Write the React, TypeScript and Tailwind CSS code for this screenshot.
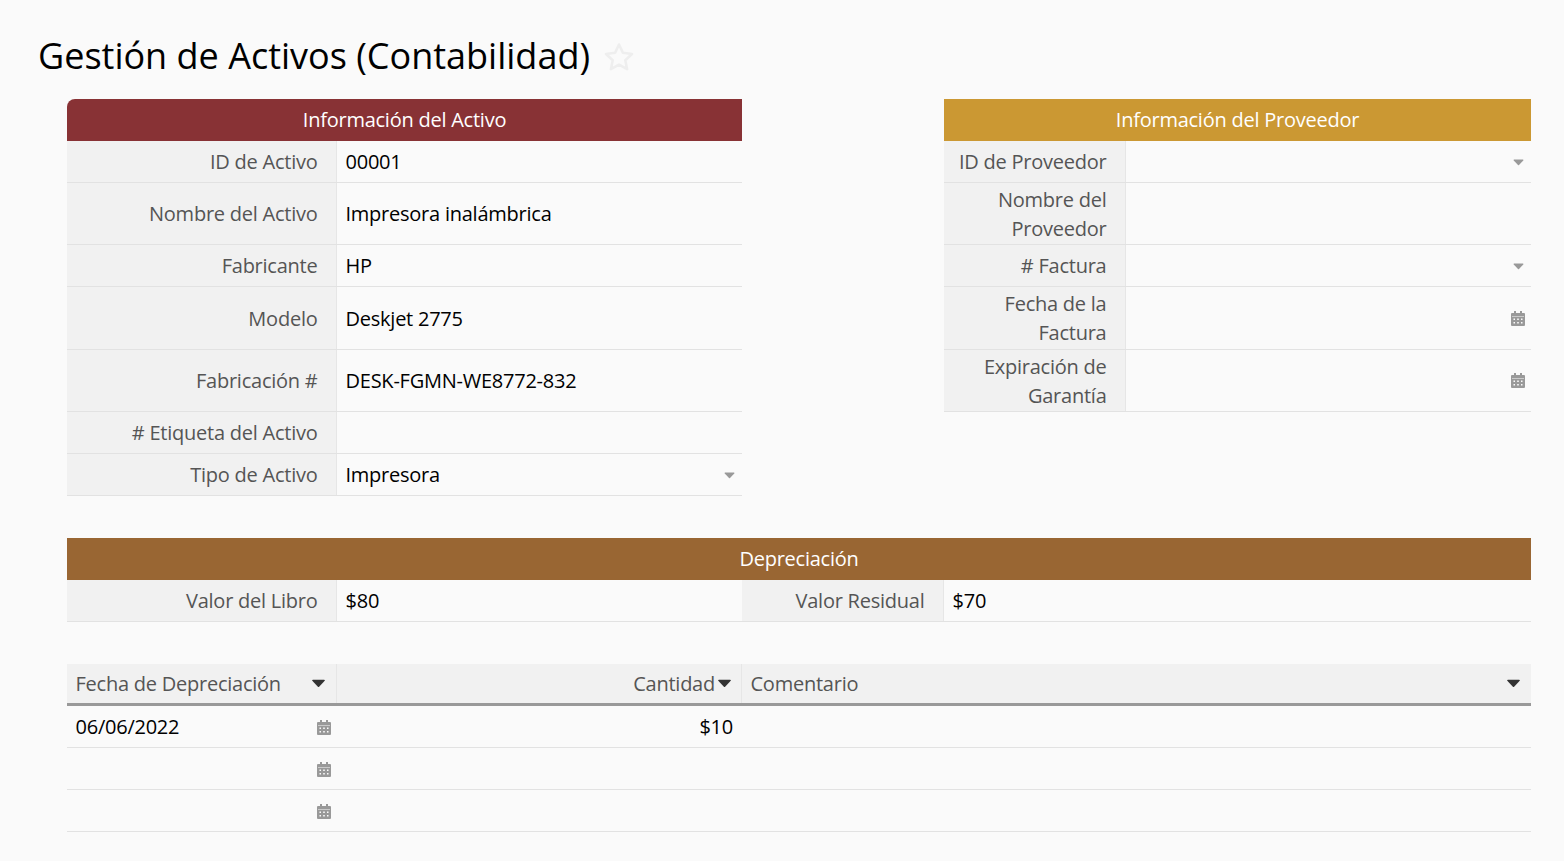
const font = '[font-family:"Open_Sans",sans-serif]';

function Caret({ dark = false }: { dark?: boolean }) {
  return (
    <svg width={dark ? 15 : 11} height={dark ? 9 : 7} viewBox="0 0 11 7" className="shrink-0">
      <path d="M0.5 1.2 Q0.5 0.5 1.2 0.5 H9.8 Q10.5 0.5 10.5 1.2 L6 6 Q5.5 6.5 5 6 Z" fill={dark ? "#333333" : "#999999"} />
    </svg>
  );
}

function Calendar() {
  return (
    <svg width="14" height="15" viewBox="0 0 14 15" className="shrink-0">
      <path
        fill="#999999"
        fillRule="evenodd"
        d="M3 0h2v2h4V0h2v2h2a1 1 0 0 1 1 1v11a1 1 0 0 1-1 1H1a1 1 0 0 1-1-1V3a1 1 0 0 1 1-1h2zM1 5v.6h12V5zM2.5 7.5v1.5h1.5V7.5zM6.2 7.5v1.5h1.6V7.5zM10 7.5v1.5h1.5V7.5zM2.5 11v1.5h1.5V11zM6.2 11v1.5h1.6V11zM10 11v1.5h1.5V11z"
      />
    </svg>
  );
}

function SectionHeader({ title, color }: { title: string; color: string }) {
  return <div className={`h-[42px] flex items-center justify-center text-white text-[20px] tracking-[-0.24px] ${color}`}>{title}</div>;
}

function Row({
  label,
  value,
  h,
  labelW,
  icon,
}: {
  label: string;
  value?: string;
  h: string;
  labelW: string;
  icon?: "caret" | "cal";
}) {
  return (
    <div className={`flex border-b border-[#e2e2e2] ${h}`}>
      <div className={`${labelW} shrink-0 bg-[#f1f1f1] border-r border-[#e6e6e6] flex items-center justify-end text-right pr-[18.5px] pl-2 text-[#555555] text-[20px] leading-[29px] tracking-[-0.24px]`}>
        <span>{label}</span>
      </div>
      <div className="flex-1 flex items-center justify-between pl-[8.5px] pr-[6px] text-black text-[20px] leading-[29px] tracking-[-0.24px]">
        <span>{value}</span>
        {icon === "caret" && <span className="pr-[1px] pt-[1px]"><Caret /></span>}
        {icon === "cal" && <Calendar />}
      </div>
    </div>
  );
}

function TableRow({ date, amount }: { date?: string; amount?: string }) {
  return (
    <div className="flex h-[42px] border-b border-[#e2e2e2] text-black text-[20px] tracking-[-0.24px]">
      <div className="w-[270px] flex items-center justify-between pl-[8.5px] pr-[6px]">
        <span>{date}</span>
        <span className="pt-[1px]"><Calendar /></span>
      </div>
      <div className="w-[405px] flex items-center justify-end pr-[9px]">{amount}</div>
    </div>
  );
}

export default function App() {
  return (
    <div className={`min-h-[861px] bg-[#fafafa] ${font}`}>
      <div className="flex items-center pl-[38px] pt-[29px] h-[99px] pb-[17px]">
        <h1 className="text-[36px] text-black tracking-[0px] leading-[50px]">Gestión de Activos (Contabilidad)</h1>
        <svg width="32" height="32" viewBox="0 0 32 32" className="ml-[13px] mt-[3px]">
          <path
            d="M16 3.5l3.9 8.3 9.1 1.2-6.7 6.2 1.8 9-8.1-4.5-8.1 4.5 1.8-9L3 13l9.1-1.2z"
            fill="none"
            stroke="#eeeeee"
            strokeWidth="2.6"
            strokeLinejoin="round"
          />
        </svg>
      </div>

      <div className="pl-[67px] pr-[33px]">
        <div className="flex gap-[202px] items-start">
          <div className="w-[675px]">
            <div className="rounded-tl-[8px] overflow-hidden">
              <SectionHeader title="Información del Activo" color="bg-[#883235]" />
            </div>
            <Row labelW="w-[270px]" h="h-[42px]" label="ID de Activo" value="00001" />
            <Row labelW="w-[270px]" h="h-[62px]" label="Nombre del Activo" value="Impresora inalámbrica" />
            <Row labelW="w-[270px]" h="h-[42px]" label="Fabricante" value="HP" />
            <Row labelW="w-[270px]" h="h-[63px]" label="Modelo" value="Deskjet 2775" />
            <Row labelW="w-[270px]" h="h-[62px]" label="Fabricación #" value="DESK-FGMN-WE8772-832" />
            <Row labelW="w-[270px]" h="h-[42px]" label="# Etiqueta del Activo" />
            <Row labelW="w-[270px]" h="h-[42px]" label="Tipo de Activo" value="Impresora" icon="caret" />
          </div>
          <div className="flex-1">
            <SectionHeader title="Información del Proveedor" color="bg-[#cb9833]" />
            <Row labelW="w-[182px]" h="h-[42px]" label="ID de Proveedor" icon="caret" />
            <Row labelW="w-[182px]" h="h-[62px]" label="Nombre del Proveedor" />
            <Row labelW="w-[182px]" h="h-[42px]" label="# Factura" icon="caret" />
            <Row labelW="w-[182px]" h="h-[63px]" label="Fecha de la Factura" icon="cal" />
            <Row labelW="w-[182px]" h="h-[62px]" label="Expiración de Garantía" icon="cal" />
          </div>
        </div>

        <div className="mt-[42px]">
          <SectionHeader title="Depreciación" color="bg-[#996633]" />
          <div className="flex">
            <div className="w-[675px]">
              <Row labelW="w-[270px]" h="h-[42px]" label="Valor del Libro" value="$80" />
            </div>
            <div className="flex-1">
              <Row labelW="w-[202px]" h="h-[42px]" label="Valor Residual" value="$70" />
            </div>
          </div>
        </div>

        <div className="mt-[42px]">
          <div className="flex h-[42px] bg-[#f1f1f1] border-b-[3px] border-[#999999] text-[#555555] text-[20px] tracking-[-0.24px]">
            <div className="w-[270px] flex items-center justify-between pl-[8.5px] pr-[10px] border-r border-[#e6e6e6]">
              <span>Fecha de Depreciación</span>
              <Caret dark />
            </div>
            <div className="w-[405px] flex items-center justify-end pr-[9px] gap-[2px] border-r border-[#e6e6e6]">
              <span>Cantidad</span>
              <Caret dark />
            </div>
            <div className="flex-1 flex items-center justify-between pl-[8.5px] pr-[10px]">
              <span>Comentario</span>
              <Caret dark />
            </div>
          </div>
          <TableRow date="06/06/2022" amount="$10" />
          <TableRow />
          <TableRow />
        </div>
      </div>
    </div>
  );
}
